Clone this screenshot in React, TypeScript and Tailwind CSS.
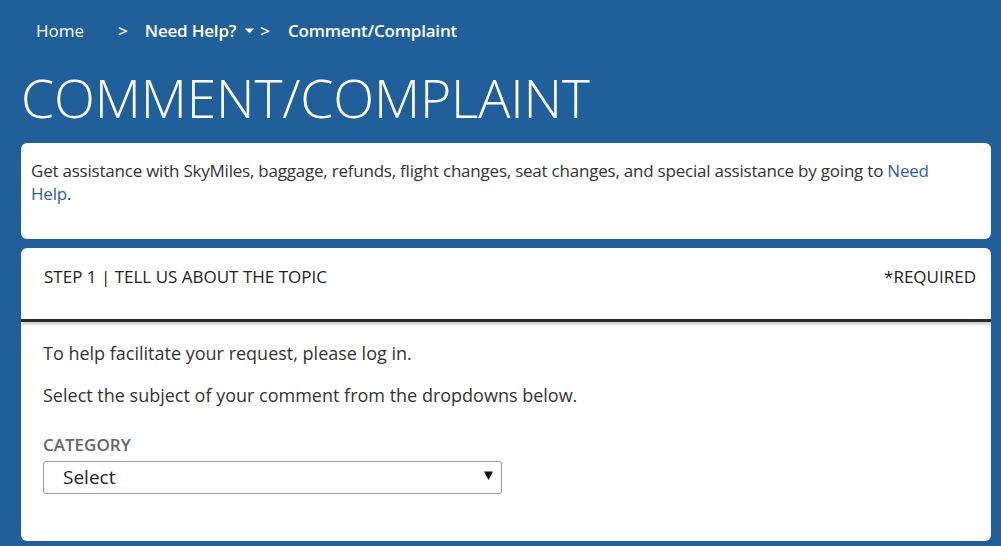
import React from "react";

export default function App() {
  return (
    <div className="w-[1001px] h-[546px] overflow-hidden bg-[#215f9a] relative" style={{ fontFamily: '"Open Sans", "Liberation Sans", sans-serif' }}>
      <nav className="flex items-center h-[22px] mt-[20px] text-white text-[17px] leading-[22px]">
        <span className="ml-[36px] font-medium">Home</span>
        <span className="ml-[34px] font-semibold">&gt;</span>
        <span className="ml-[17px] font-semibold tracking-[-0.2px]">Need Help?</span>
        <svg className="ml-[9px]" width="9" height="6" viewBox="0 0 9 6"><path d="M0 0.5h9L4.5 5.5z" fill="#fff" /></svg>
        <span className="ml-[6px] font-semibold">&gt;</span>
        <span className="ml-[18px] font-semibold tracking-[-0.2px]">Comment/Complaint</span>
      </nav>
      <h1 className="ml-[21px] mt-[26px] text-white text-[53.5px] leading-[60px] font-light tracking-[-0.2px]">COMMENT/COMPLAINT</h1>
      <div className="ml-[21px] mr-[10px] mt-[15px] flex flex-col gap-[9px]">
        <div className="bg-white rounded-[6px] h-[96px] pl-[10px] pr-[40px]">
          <p className="pt-[16px] text-[17px] leading-[23px] text-[#333] tracking-[-0.22px]">
            Get assistance with SkyMiles, baggage, refunds, flight changes, seat changes, and special assistance by going to <span className="text-[#2f5ea6]">Need</span> <span className="text-[#2f5ea6]">Help</span>.
          </p>
        </div>
        <div className="bg-white rounded-[6px] h-[293px] overflow-hidden">
          <div className="h-[71px] flex items-start justify-between pl-[23px] pr-[15px] pt-[18px] text-[17px] leading-[22px] font-medium text-[#222]">
            <span>STEP 1 | TELL US ABOUT THE TOPIC</span>
            <span>*REQUIRED</span>
          </div>
          <div className="h-[3px] bg-[#2a2a2a] shadow-[0_2px_3px_rgba(0,0,0,0.25)]" />
          <div className="pl-[22px] pt-[19px] text-[#333]">
            <p className="text-[18px] leading-[24px]">To help facilitate your request, please log in.</p>
            <p className="mt-[18px] text-[18px] leading-[24px]">Select the subject of your comment from the dropdowns below.</p>
            <p className="mt-[27px] text-[17px] leading-[22px] font-semibold text-[#666]">CATEGORY</p>
            <div className="mt-[5px] w-[459px] h-[33px] border border-[#9a9a9a] rounded-[3px] flex items-center justify-between pl-[19px] pr-[8px] text-[19px] text-[#222]">
              <span>Select</span>
              <svg width="9" height="9" viewBox="0 0 9 9" className="mb-[4px]"><path d="M0 0.5h9L4.5 9z" fill="#111" /></svg>
            </div>
          </div>
        </div>
      </div>
    </div>
  );
}
